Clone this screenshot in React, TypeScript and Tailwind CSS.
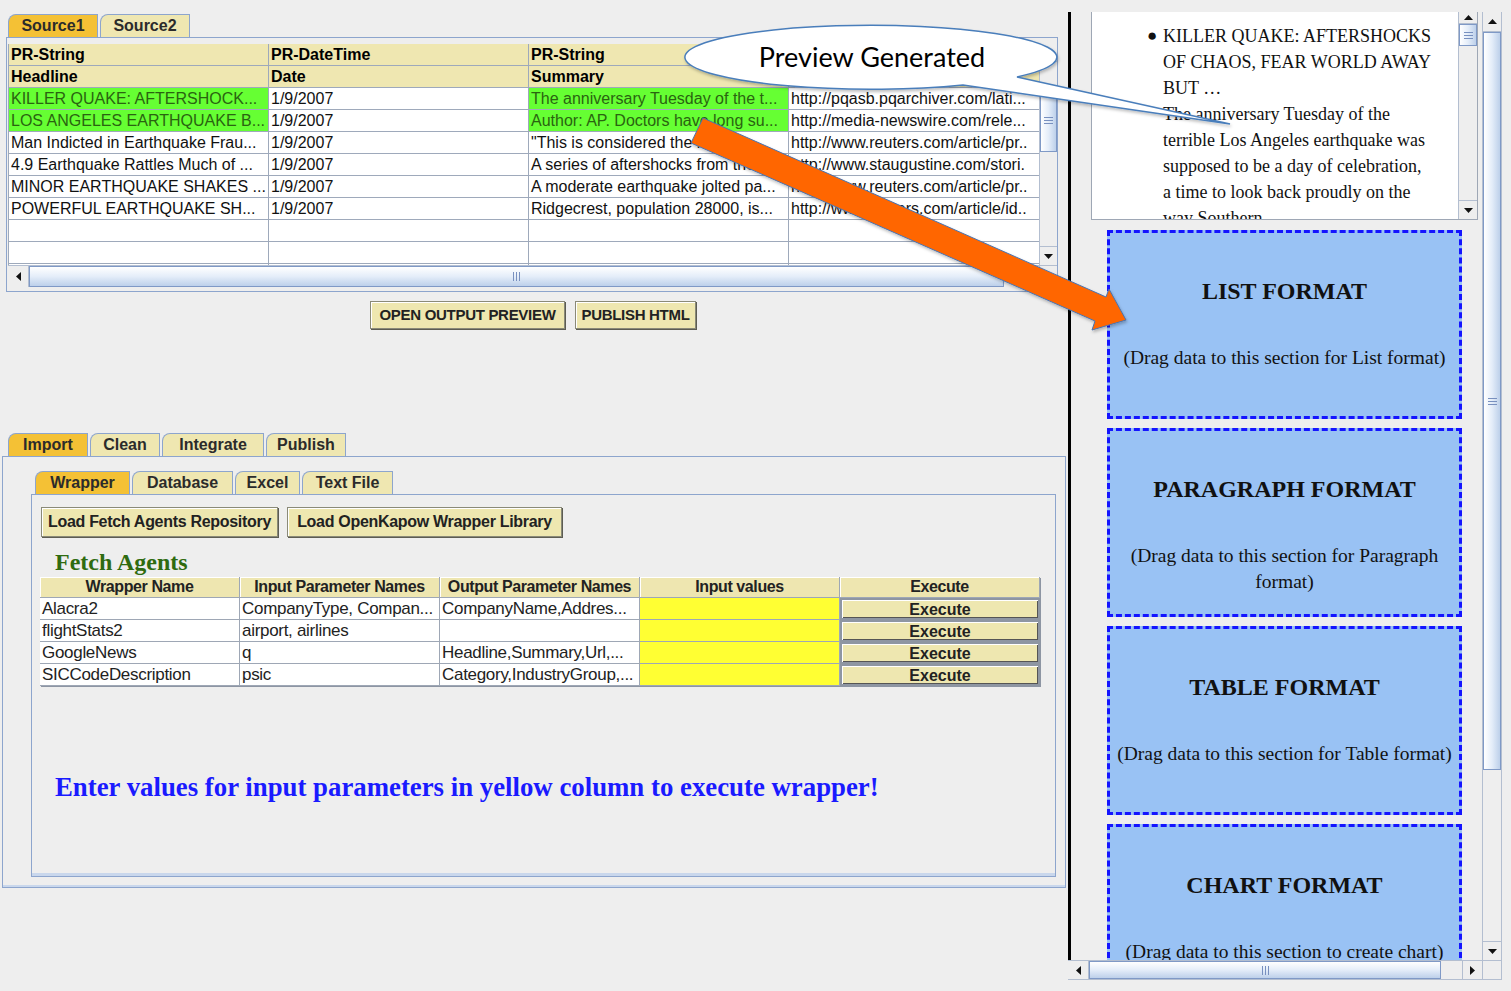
import React from 'react';

type Dir = 'up' | 'down' | 'left' | 'right';

const serif = "font-['Liberation_Serif','Times_New_Roman',serif]";

function Tri({ dir }: { dir: Dir }) {
  const v = dir === 'up' || dir === 'down';
  const pts = { up: '0,5 4.5,0 9,5', down: '0,0 4.5,5 9,0', left: '5,0 0,4.5 5,9', right: '0,0 5,4.5 0,9' }[dir];
  return (
    <svg width={v ? 9 : 5} height={v ? 5 : 9} viewBox={v ? '0 0 9 5' : '0 0 5 9'}>
      <polygon points={pts} fill="#111" />
    </svg>
  );
}

function Grip({ vertical }: { vertical?: boolean }) {
  if (vertical)
    return (
      <div className="flex flex-col gap-[2px]">
        <div className="w-[9px] h-px bg-[#7890bf]" />
        <div className="w-[9px] h-px bg-[#7890bf]" />
        <div className="w-[9px] h-px bg-[#7890bf]" />
      </div>
    );
  return (
    <div className="flex gap-[2px]">
      <div className="h-[9px] w-px bg-[#7890bf]" />
      <div className="h-[9px] w-px bg-[#7890bf]" />
      <div className="h-[9px] w-px bg-[#7890bf]" />
    </div>
  );
}

function VScroll({ className, top, thumb, upH = 'h-[18px]' }: { className: string; top: string; thumb: string; upH?: string }) {
  return (
    <div className={`flex flex-col bg-[#eeeeee] border-l border-[#b3bed0] ${className}`}>
      <div className={`${upH} shrink-0 flex items-center justify-center border-b border-[#b3bed0]`}>
        <Tri dir="up" />
      </div>
      <div className="flex-1 flex flex-col min-h-0">
        <div className={`${top} shrink-0`} />
        <div className={`${thumb} shrink-0 border border-[#7f99c6] bg-gradient-to-r from-white via-[#e4edf9] to-[#bdd0ea] flex items-center justify-center`}>
          <Grip vertical />
        </div>
      </div>
      <div className="h-[19px] shrink-0 flex items-center justify-center border-t border-[#b3bed0]">
        <Tri dir="down" />
      </div>
    </div>
  );
}

function HScroll({ className, thumb, tail }: { className: string; thumb: string; tail?: React.ReactNode }) {
  return (
    <div className={`flex bg-[#eeeeee] border-t border-[#b3bed0] ${className}`}>
      <div className="w-[21px] shrink-0 flex items-center justify-center border-r border-[#b3bed0]">
        <Tri dir="left" />
      </div>
      <div className={`${thumb} shrink-0 border border-[#7f99c6] bg-gradient-to-b from-white via-[#e4edf9] to-[#bdd0ea] flex items-center justify-center`}>
        <Grip />
      </div>
      <div className="flex-1" />
      {tail}
    </div>
  );
}

function Tab({ label, on, w }: { label: string; on?: boolean; w: string }) {
  return (
    <div
      className={`${w} h-[23px] flex items-center justify-center rounded-tl-[8px] border border-b-0 border-[#8da5cd] text-[16px] font-bold text-[#2b2b2b] ${
        on ? 'bg-[#f4c135]' : 'bg-[#efe7b1]'
      }`}
    >
      {label}
    </div>
  );
}

function Btn({ label, w, h = 'h-[28px]', size = 'text-[15px]' }: { label: string; w: string; h?: string; size?: string }) {
  return (
    <div
      className={`${w} ${h} ${size} flex items-center justify-center bg-[#eee7b0] border border-[#8a8a78] shadow-[inset_1px_1px_0_#ffffff,1px_1px_0_#5c5c52] font-bold text-[#222] whitespace-nowrap tracking-[-0.3px]`}
    >
      {label}
    </div>
  );
}

const topCols = ['w-[260px]', 'w-[260px]', 'w-[260px]', 'w-[252px]'];

const topRows: [string, string, string, string, boolean][] = [
  ['KILLER QUAKE: AFTERSHOCK...', '1/9/2007', 'The anniversary Tuesday of the t...', 'http://pqasb.pqarchiver.com/lati...', true],
  ['LOS ANGELES EARTHQUAKE B...', '1/9/2007', 'Author: AP. Doctors have long su...', 'http://media-newswire.com/rele...', true],
  ['Man Indicted in Earthquake Frau...', '1/9/2007', '"This is considered the largest ...', 'http://www.reuters.com/article/pr..', false],
  ['4.9 Earthquake Rattles Much of ...', '1/9/2007', 'A series of aftershocks from the...', 'http://www.staugustine.com/stori.', false],
  ['MINOR EARTHQUAKE SHAKES ...', '1/9/2007', 'A moderate earthquake jolted pa...', 'http://www.reuters.com/article/pr..', false],
  ['POWERFUL EARTHQUAKE SH...', '1/9/2007', 'Ridgecrest, population 28000, is...', 'http://www.reuters.com/article/id..', false],
];

function SourceTable() {
  return (
    <div className="w-[1032px] h-[221px] overflow-hidden bg-white border-l border-[#9ea9bb] text-[16px] leading-[21px]">
      {[
        ['PR-String', 'PR-DateTime', 'PR-String', 'PR-URL'],
        ['Headline', 'Date', 'Summary', 'Url'],
      ].map((r, i) => (
        <div key={i} className="flex h-[22px] bg-[#efe7b1] border-b border-[#9ea9bb] font-bold">
          {r.map((c, j) => (
            <div key={j} className={`${topCols[j]} shrink-0 px-[2px] border-r border-[#9ea9bb] whitespace-nowrap overflow-hidden`}>
              {c}
            </div>
          ))}
        </div>
      ))}
      {topRows.map((r, i) => (
        <div key={i} className="flex h-[22px] border-b border-[#9ea9bb]">
          {r.slice(0, 4).map((c, j) => {
            const green = r[4] && (j === 0 || j === 2);
            return (
              <div
                key={j}
                className={`${topCols[j]} shrink-0 px-[2px] border-r border-[#9ea9bb] whitespace-nowrap overflow-hidden ${
                  green ? 'bg-[#66ff33] text-[#2a6410]' : 'text-[#111]'
                }`}
              >
                {c as string}
              </div>
            );
          })}
        </div>
      ))}
      {[0, 1, 2].map((i) => (
        <div key={i} className="flex h-[22px] border-b border-[#9ea9bb]">
          {topCols.map((w, j) => (
            <div key={j} className={`${w} shrink-0 border-r border-[#9ea9bb]`} />
          ))}
        </div>
      ))}
    </div>
  );
}

const agents = [
  ['Alacra2', 'CompanyType, Compan...', 'CompanyName,Addres...'],
  ['flightStats2', 'airport, airlines', ''],
  ['GoogleNews', 'q', 'Headline,Summary,Url,...'],
  ['SICCodeDescription', 'psic', 'Category,IndustryGroup,...'],
];

function AgentTable() {
  const head = ['Wrapper Name', 'Input Parameter Names', 'Output Parameter Names', 'Input values', 'Execute'];
  return (
    <div className="w-[1000px] shadow-[1px_1px_0_#8d95a3]">
      <div className="flex h-[21px]">
        {head.map((h) => (
          <div
            key={h}
            className="w-[200px] shrink-0 flex items-center justify-center bg-[#eee6b0] border-r border-b border-[#9ea7b5] shadow-[inset_1px_1px_0_#ffffff] text-[16px] font-bold text-[#222] whitespace-nowrap tracking-[-0.4px]"
          >
            {h}
          </div>
        ))}
      </div>
      {agents.map((r) => (
        <div key={r[0]} className="flex h-[22px] text-[17px] leading-[21px] text-[#222]">
          {r.map((c, j) => (
            <div key={j} className="w-[200px] shrink-0 px-[2px] bg-white border-r border-b border-[#9ea7b5] whitespace-nowrap overflow-hidden tracking-[-0.3px]">
              {c}
            </div>
          ))}
          <div className="w-[200px] shrink-0 bg-[#ffff33] border-r border-b border-[#9ea7b5]" />
          <div className="w-[200px] shrink-0 bg-[#8e96a2] p-[2px]">
            <div className="h-full flex items-center justify-center bg-[#eee7b0] shadow-[inset_1px_1px_0_#ffffff,inset_-1px_-1px_0_#555] text-[16px] font-bold text-[#222]">
              Execute
            </div>
          </div>
        </div>
      ))}
    </div>
  );
}

function LeftPane() {
  return (
    <div className="w-[1068px] shrink-0 flex flex-col">
      <div className="pt-[14px] pl-[8px] flex gap-[2px]">
        <Tab label="Source1" on w="w-[90px]" />
        <Tab label="Source2" w="w-[90px]" />
      </div>
      <div className="ml-[6px] w-[1052px] h-[255px] border border-[#8da5cd] pt-[6px] pl-[1px]">
        <div className="flex">
          <SourceTable />
          <VScroll className="w-[18px] h-[221px]" top="h-[26px]" thumb="h-[64px]" />
        </div>
        <div className="flex">
          <HScroll className="w-[1032px] h-[22px]" thumb="w-[975px]" />
          <div className="w-[18px] h-[22px] bg-[#eeeeee] border-t border-l border-[#b3bed0]" />
        </div>
      </div>

      <div className="mt-[9px] ml-[370px] flex gap-[10px]">
        <Btn label="OPEN OUTPUT PREVIEW" w="w-[195px]" />
        <Btn label="PUBLISH HTML" w="w-[121px]" />
      </div>

      <div className="mt-[104px] pl-[8px] flex gap-[2px]">
        <Tab label="Import" on w="w-[80px]" />
        <Tab label="Clean" w="w-[70px]" />
        <Tab label="Integrate" w="w-[102px]" />
        <Tab label="Publish" w="w-[80px]" />
      </div>
      <div className="ml-[2px] w-[1064px] h-[432px] border border-[#8da5cd] shadow-[inset_0_-2px_0_#c9d7ec] pt-[14px] pl-[28px]">
        <div className="pl-[4px] flex gap-[2px]">
          <Tab label="Wrapper" on w="w-[95px]" />
          <Tab label="Database" w="w-[101px]" />
          <Tab label="Excel" w="w-[65px]" />
          <Tab label="Text File" w="w-[91px]" />
        </div>
        <div className="w-[1025px] h-[383px] border border-[#8da5cd] shadow-[inset_0_-3px_0_#c9d7ec] pt-[12px] pl-[9px]">
          <div className="flex gap-[9px]">
            <Btn label="Load Fetch Agents Repository" w="w-[237px]" h="h-[30px]" size="text-[16px]" />
            <Btn label="Load OpenKapow Wrapper Library" w="w-[275px]" h="h-[30px]" size="text-[16px]" />
          </div>
          <div className={`mt-[11px] ml-[14px] ${serif} text-[24px] leading-[28px] font-bold text-[#2f6b10]`}>Fetch Agents</div>
          <div className="mt-[1px] -ml-[1px]">
            <AgentTable />
          </div>
          <div className={`mt-[86px] ml-[14px] ${serif} text-[26.8px] leading-[30px] font-bold text-[#1a1aff] whitespace-nowrap`}>
            Enter values for input parameters in yellow column to execute wrapper!
          </div>
        </div>
      </div>
    </div>
  );
}

function FormatBox({ title, sub }: { title: string; sub: string }) {
  return (
    <div className={`w-[355px] h-[189px] shrink-0 border-[3px] border-dashed border-[#1414ff] bg-[#99c2f4] flex flex-col items-center pt-[44px] text-center ${serif} text-[#111]`}>
      <div className="text-[24px] font-bold leading-[28px]">{title}</div>
      <div className="mt-[40px] text-[19.5px] leading-[26px]">{sub}</div>
    </div>
  );
}

const previewLines = [
  'OF CHAOS, FEAR WORLD AWAY',
  'BUT …',
  'The anniversary Tuesday of the',
  'terrible Los Angeles earthquake was',
  'supposed to be a day of celebration,',
  'a time to look back proudly on the',
  'way Southern',
];

function RightPane() {
  return (
    <div className="flex-1 pt-[12px]">
      <div className="w-[434px] h-[968px] flex flex-col">
        <div className="flex h-[948px]">
          <div className="w-[414px] border-l-[3px] border-black overflow-hidden flex flex-col">
            <div className="ml-[20px] w-[387px] h-[208px] shrink-0 flex bg-white border-l border-b border-r border-[#9ea7b5]">
              <div className={`flex-1 pt-[11px] pl-[55px] ${serif} text-[18px] leading-[26px] text-[#111] overflow-hidden`}>
                <div className="flex">
                  <span className="w-[16px] text-[17px]">●</span>
                  <span>KILLER QUAKE: AFTERSHOCKS</span>
                </div>
                {previewLines.map((l) => (
                  <div key={l} className="pl-[16px] whitespace-nowrap">
                    {l}
                  </div>
                ))}
              </div>
              <VScroll className="w-[19px] h-[207px]" upH="h-[12px]" top="h-0" thumb="h-[22px]" />
            </div>
            <div className="mt-[10px] ml-[36px] flex flex-col gap-[9px]">
              <FormatBox title="LIST FORMAT" sub="(Drag data to this section for List format)" />
              <FormatBox title="PARAGRAPH FORMAT" sub="(Drag data to this section for Paragraph format)" />
              <FormatBox title="TABLE FORMAT" sub="(Drag data to this section for Table format)" />
              <FormatBox title="CHART FORMAT" sub="(Drag data to this section to create chart)" />
            </div>
          </div>
          <VScroll className="w-[20px] h-[948px] border-r" upH="h-[20px]" top="h-0" thumb="h-[738px]" />
        </div>
        <div className="flex h-[20px]">
          <HScroll
            className="w-[414px] h-[20px] border-b"
            thumb="w-[352px]"
            tail={
              <div className="w-[20px] shrink-0 flex items-center justify-center border-l border-[#b3bed0]">
                <Tri dir="right" />
              </div>
            }
          />
          <div className="w-[20px] h-[20px] bg-[#eeeeee] border border-[#b3bed0]" />
        </div>
      </div>
    </div>
  );
}

function Overlay() {
  return (
    <>
      <svg className="absolute inset-0 pointer-events-none" width={1511} height={991} viewBox="0 0 1511 991">
        <defs>
          <filter id="sh" x="-10%" y="-10%" width="120%" height="130%">
            <feDropShadow dx="1" dy="2" stdDeviation="1.5" floodColor="#000" floodOpacity="0.25" />
          </filter>
        </defs>
        <path
          d="M 963 85 A 186 32 0 1 1 1017 77 L 1230 124 Z"
          fill="#ffffff"
          stroke="#4a7ebb"
          strokeWidth={1.5}
          filter="url(#sh)"
        />
        <polygon
          points="703,118 1106,297 1109,289 1126,320 1092,330 1095,321 691,143"
          fill="#ff6600"
          stroke="#4a74b0"
          strokeWidth={1}
          filter="url(#sh)"
        />
      </svg>
      <div className="absolute left-[686px] top-[40px] w-[372px] text-center font-['Lato','Liberation_Sans',sans-serif] text-[27px] leading-[34px] text-black">
        Preview Generated
      </div>
    </>
  );
}

export default function App() {
  return (
    <div className="relative w-[1511px] h-[991px] overflow-hidden bg-[#eeeeee] font-['Liberation_Sans',Arial,sans-serif] text-black flex">
      <LeftPane />
      <RightPane />
      <Overlay />
    </div>
  );
}
